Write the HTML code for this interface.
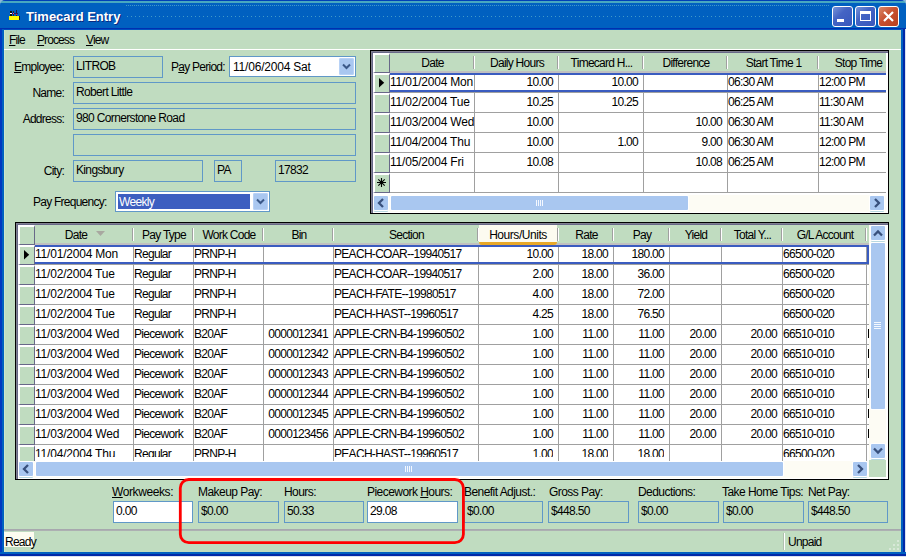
<!DOCTYPE html><html><head><meta charset="utf-8"><title>Timecard Entry</title><style>
*{box-sizing:border-box;margin:0;padding:0}
html,body{width:906px;height:557px;overflow:hidden;background:#c0dcc0}
body{position:relative;font-family:"Liberation Sans",sans-serif;font-size:12px;letter-spacing:-0.75px;color:#000;line-height:13px}
.a{position:absolute;white-space:nowrap}
.t{position:absolute;white-space:nowrap;height:13px;line-height:13px}
.f{position:absolute;border:1px solid #6098c8;background:#c0dcc0;padding:3px 0 0 2px;letter-spacing:-0.65px;white-space:nowrap;overflow:hidden}
.w{background:#fff}
.c{position:absolute;background:#fff;border-right:1px solid #a0a0a0;border-bottom:1px solid #a0a0a0;height:20px;line-height:13px;padding:3px 1px 0 0;letter-spacing:-0.7px;white-space:nowrap;overflow:hidden}
.r{text-align:right;padding-right:5px}
.h{position:absolute;background:#c0dcc0;height:18px;text-align:center;padding-top:4px;white-space:nowrap;overflow:hidden}
.hs{position:absolute;width:2px;height:13px;border-left:1px solid #a0a0a0;border-right:1px solid #fff}
.rh{position:absolute;background:#c0dcc0;border-top:2px solid #fff;border-left:2px solid #fff;border-right:1px solid #686888;border-bottom:1px solid #686888}
u{text-decoration:underline;text-decoration-thickness:1px;text-underline-offset:0.75px}
.d{letter-spacing:-0.2px}
</style></head><body>
<div class="a" style="left:0;top:0;width:906px;height:10px;background:#8cb8d8"></div>
<div class="a" style="left:0;top:0;width:906px;height:30px;background:linear-gradient(#0040b8 0,#0040b8 1px,#48a8c0 1px,#48a8c0 3px,#0060c0 3px,#0060c0 28px,#0030b0 28px,#0030b0 29px,#0050c0 29px);border-radius:5px 5px 0 0"></div>
<div class="a" style="left:126px;top:5px;width:704px;height:1px;background:repeating-linear-gradient(90deg,#4098c8 0,#4098c8 1px,transparent 1px,transparent 2px)"></div>
<div class="a" style="left:127px;top:16px;width:702px;height:1px;background:repeating-linear-gradient(90deg,#4098c8 0,#4098c8 1px,transparent 1px,transparent 4px)"></div>
<div class="a" style="left:0;top:29px;width:4px;height:528px;background:linear-gradient(90deg,#0038c0,#0038c0 2px,#0060c0 2px,#0060c0)"></div>
<div class="a" style="left:4px;top:30px;width:1px;height:522px;background:#cce6cc"></div>
<div class="a" style="left:901px;top:29px;width:5px;height:528px;background:linear-gradient(90deg,#0060c0,#0060c0 2px,#0028a8 2px,#0028a8 4px,#d8e0f0 4px)"></div>
<div class="a" style="left:0;top:552px;width:906px;height:5px;background:linear-gradient(#0060c0,#0060c0 2px,#0028a8 2px,#0028a8 4px,#d8e0f0 4px)"></div>
<div class="a" style="left:9px;top:16px;width:10px;height:4px;background:#ffff00;box-shadow:1px 0 0 #202020"></div>
<div class="a" style="left:10px;top:11px;width:2px;height:5px;background:#101010"></div>
<div class="a" style="left:13px;top:11px;width:1px;height:5px;background:#403010"></div>
<div class="a" style="left:16px;top:10px;width:1px;height:6px;background:#202040"></div>
<div class="a" style="left:12px;top:13px;width:6px;height:1px;background:#202060"></div>
<div class="a" style="left:10px;top:13px;width:2px;height:1px;background:#fff"></div>
<div class="a" style="left:13px;top:13px;width:1px;height:1px;background:#f030d0"></div>
<div class="a" style="left:16px;top:14px;width:1px;height:1px;background:#f02020"></div>
<div class="a" style="left:26px;top:9px;font-weight:bold;font-size:13px;letter-spacing:0;line-height:16px;color:#fff;text-shadow:1px 1px 0 #0a2a80">Timecard Entry</div>
<div class="a" style="left:832px;top:6px;width:21px;height:21px;border:1px solid #fff;border-radius:3px;background:linear-gradient(135deg,#7894d8,#4464c4 40%,#3858bc)"></div>
<div class="a" style="left:855px;top:6px;width:21px;height:21px;border:1px solid #fff;border-radius:3px;background:linear-gradient(135deg,#7894d8,#4464c4 40%,#3858bc)"></div>
<div class="a" style="left:878px;top:6px;width:21px;height:21px;border:1px solid #fff;border-radius:3px;background:linear-gradient(135deg,#d88868,#c85030 45%,#b84020)"></div>
<div class="a" style="left:837px;top:19px;width:7px;height:3px;background:#fff"></div>
<div class="a" style="left:860px;top:11px;width:11px;height:10px;border:1px solid #fff;border-top:3px solid #fff"></div>
<svg class="a" style="left:878px;top:6px" width="21" height="21"><path d="M6 6L15 15M15 6L6 15" stroke="#fff" stroke-width="2.2" fill="none"/></svg>
<div class="t" style="left:9px;top:34px;letter-spacing:-0.9px"><u>F</u>ile</div>
<div class="t" style="left:37px;top:34px;letter-spacing:-0.9px"><u>P</u>rocess</div>
<div class="t" style="left:86px;top:34px;letter-spacing:-0.9px"><u>V</u>iew</div>
<div class="a" style="left:4px;top:49px;width:897px;height:1px;background:#fff"></div>
<div class="t" style="right:842px;top:61px"><u>E</u>mployee:</div>
<div class="f" style="left:73px;top:56px;width:90px;height:22px">LITROB</div>
<div class="t" style="left:171px;top:61px">P<u>a</u>y Period:</div>
<div class="t" style="right:842px;top:87px">Name:</div>
<div class="f" style="left:73px;top:82px;width:283px;height:22px">Robert Little</div>
<div class="t" style="right:842px;top:113px">Address:</div>
<div class="f" style="left:73px;top:108px;width:283px;height:22px">980 Cornerstone Road</div>
<div class="f" style="left:73px;top:134px;width:283px;height:22px"></div>
<div class="t" style="right:842px;top:165px">City:</div>
<div class="f" style="left:73px;top:160px;width:130px;height:22px">Kingsbury</div>
<div class="f" style="left:214px;top:160px;width:28px;height:22px">PA</div>
<div class="f" style="left:275px;top:160px;width:81px;height:22px">17832</div>
<div class="t" style="left:33px;top:196px">Pay Frequency:</div>
<div class="a" style="left:229px;top:56px;width:127px;height:21px;border:1px solid #6098c8;background:#fff"></div>
<div class="t d" style="left:233px;top:61px">11/06/2004 Sat</div>
<div class="a" style="left:339px;top:58px;width:15px;height:17px;border-radius:2px;background:#a9c7f0;box-shadow:inset 0 0 0 1px #b8d2f6"></div>
<svg class="a" style="left:339px;top:58px" width="15" height="17"><path d="M4 6.5L7.5 10L11 6.5" stroke="#3a5888" stroke-width="2" fill="none"/></svg>
<div class="a" style="left:115px;top:191px;width:155px;height:21px;border:1px solid #6098c8;background:#fff"></div>
<div class="a" style="left:118px;top:194px;width:132px;height:15px;background:#3d5ec0;color:#fff;line-height:13px;padding:2px 0 0 1px;letter-spacing:-0.65px">Weekly</div>
<div class="a" style="left:253px;top:193px;width:15px;height:17px;border-radius:2px;background:#a9c7f0;box-shadow:inset 0 0 0 1px #b8d2f6"></div>
<svg class="a" style="left:253px;top:193px" width="15" height="17"><path d="M4 6.5L7.5 10L11 6.5" stroke="#3a5888" stroke-width="2" fill="none"/></svg>
<div class="a" style="left:370px;top:50px;width:519px;height:164px;border:1px solid #000;background:#fff"></div>
<div class="a" style="left:371px;top:51px;width:517px;height:1px;background:#808090"></div>
<div class="a" style="left:371px;top:51px;width:1px;height:162px;background:#808090"></div>
<div class="a" style="left:372px;top:52px;width:516px;height:1px;background:#686888"></div>
<div class="a" style="left:372px;top:52px;width:1px;height:161px;background:#686888"></div>
<div class="a" style="left:372px;top:52px;width:514px;height:21px;background:#c0dcc0;border-top:1px solid #686888;border-bottom:2px solid #c0c0c0"></div>
<div class="a" style="left:372px;top:52px;width:1px;height:141px;background:#686888"></div>
<div class="rh" style="left:373px;top:53px;width:17px;height:20px"></div>
<div class="h" style="left:390px;top:53px;width:85px">Date</div>
<div class="hs" style="left:473px;top:56px"></div>
<div class="h" style="left:475px;top:53px;width:84px">Daily Hours</div>
<div class="hs" style="left:557px;top:56px"></div>
<div class="h" style="left:559px;top:53px;width:85px">Timecard H...</div>
<div class="hs" style="left:642px;top:56px"></div>
<div class="h" style="left:644px;top:53px;width:84px">Difference</div>
<div class="hs" style="left:726px;top:56px"></div>
<div class="h" style="left:728px;top:53px;width:91px">Start Time 1</div>
<div class="hs" style="left:817px;top:56px"></div>
<div class="h" style="left:819px;top:53px;width:79px;clip-path:inset(0 12px 0 0)">Stop Time</div>
<div class="rh" style="left:373px;top:73px;width:17px;height:20px"></div>
<svg class="a" style="left:379px;top:78px" width="6" height="11"><path d="M0 0L5.2 4.75L0 9.5Z" fill="#000"/></svg>
<div class="c d" style="left:390px;top:73px;width:85px;height:20px">11/01/2004 Mon</div>
<div class="c r" style="left:475px;top:73px;width:84px;height:20px">10.00</div>
<div class="c r" style="left:559px;top:73px;width:85px;height:20px">10.00</div>
<div class="c r" style="left:644px;top:73px;width:84px;height:20px"></div>
<div class="c" style="left:728px;top:73px;width:91px;height:20px">06:30 AM</div>
<div class="c" style="left:819px;top:73px;width:67px;height:20px;border-right:0">12:00 PM</div>
<div class="a" style="left:390px;top:73px;width:496px;height:19px;border:2px solid #3a5cc0;border-left:0;border-right:0"></div>
<div class="rh" style="left:373px;top:93px;width:17px;height:20px"></div>
<div class="c d" style="left:390px;top:93px;width:85px;height:20px">11/02/2004 Tue</div>
<div class="c r" style="left:475px;top:93px;width:84px;height:20px">10.25</div>
<div class="c r" style="left:559px;top:93px;width:85px;height:20px">10.25</div>
<div class="c r" style="left:644px;top:93px;width:84px;height:20px"></div>
<div class="c" style="left:728px;top:93px;width:91px;height:20px">06:25 AM</div>
<div class="c" style="left:819px;top:93px;width:67px;height:20px;border-right:0">11:30 AM</div>
<div class="rh" style="left:373px;top:113px;width:17px;height:20px"></div>
<div class="c d" style="left:390px;top:113px;width:85px;height:20px">11/03/2004 Wed</div>
<div class="c r" style="left:475px;top:113px;width:84px;height:20px">10.00</div>
<div class="c r" style="left:559px;top:113px;width:85px;height:20px"></div>
<div class="c r" style="left:644px;top:113px;width:84px;height:20px">10.00</div>
<div class="c" style="left:728px;top:113px;width:91px;height:20px">06:30 AM</div>
<div class="c" style="left:819px;top:113px;width:67px;height:20px;border-right:0">11:30 AM</div>
<div class="rh" style="left:373px;top:133px;width:17px;height:20px"></div>
<div class="c d" style="left:390px;top:133px;width:85px;height:20px">11/04/2004 Thu</div>
<div class="c r" style="left:475px;top:133px;width:84px;height:20px">10.00</div>
<div class="c r" style="left:559px;top:133px;width:85px;height:20px">1.00</div>
<div class="c r" style="left:644px;top:133px;width:84px;height:20px">9.00</div>
<div class="c" style="left:728px;top:133px;width:91px;height:20px">06:30 AM</div>
<div class="c" style="left:819px;top:133px;width:67px;height:20px;border-right:0">12:00 PM</div>
<div class="rh" style="left:373px;top:153px;width:17px;height:20px"></div>
<div class="c d" style="left:390px;top:153px;width:85px;height:20px">11/05/2004 Fri</div>
<div class="c r" style="left:475px;top:153px;width:84px;height:20px">10.08</div>
<div class="c r" style="left:559px;top:153px;width:85px;height:20px"></div>
<div class="c r" style="left:644px;top:153px;width:84px;height:20px">10.08</div>
<div class="c" style="left:728px;top:153px;width:91px;height:20px">06:25 AM</div>
<div class="c" style="left:819px;top:153px;width:67px;height:20px;border-right:0">12:00 PM</div>
<div class="rh" style="left:373px;top:173px;width:17px;height:20px"></div>
<svg class="a" style="left:377px;top:178px" width="9" height="9"><path d="M4.5 0V9M0 4.5H9M1.3 1.3L7.7 7.7M7.7 1.3L1.3 7.7" stroke="#000" stroke-width="1.1" fill="none"/></svg>
<div class="c d" style="left:390px;top:173px;width:85px;height:20px"></div>
<div class="c r" style="left:475px;top:173px;width:84px;height:20px"></div>
<div class="c r" style="left:559px;top:173px;width:85px;height:20px"></div>
<div class="c r" style="left:644px;top:173px;width:84px;height:20px"></div>
<div class="c" style="left:728px;top:173px;width:91px;height:20px"></div>
<div class="c" style="left:819px;top:173px;width:67px;height:20px;border-right:0"></div>
<div class="a" style="left:373px;top:195px;width:513px;height:17px;background:#fdfcf4"></div>
<div class="a" style="left:374px;top:196px;width:14px;height:14px;border-radius:1px;background:#a9c7f0;box-shadow:0 0 0 1px #fff,0 2px 0 0 #b8d8e0"></div>
<svg class="a" style="left:374px;top:196px" width="14" height="14"><path d="M9 3L5 7L9 11" stroke="#38507c" stroke-width="2.3" fill="none"/></svg>
<div class="a" style="left:870px;top:196px;width:14px;height:14px;border-radius:1px;background:#a9c7f0;box-shadow:0 0 0 1px #fff,0 2px 0 0 #b8d8e0"></div>
<svg class="a" style="left:870px;top:196px" width="14" height="14"><path d="M5 3L9 7L5 11" stroke="#38507c" stroke-width="2.3" fill="none"/></svg>
<div class="a" style="left:391px;top:196px;width:297px;height:14px;border-radius:1px;background:#a9c7f0;box-shadow:0 0 0 1px #fff"></div>
<div class="a" style="left:536px;top:200px;width:1px;height:6px;background:#f4f8ff"></div>
<div class="a" style="left:538px;top:200px;width:1px;height:6px;background:#f4f8ff"></div>
<div class="a" style="left:540px;top:200px;width:1px;height:6px;background:#f4f8ff"></div>
<div class="a" style="left:542px;top:200px;width:1px;height:6px;background:#f4f8ff"></div>
<div class="a" style="left:15px;top:222px;width:874px;height:258px;border:1px solid #000;background:#fff"></div>
<div class="a" style="left:16px;top:223px;width:872px;height:1px;background:#808090"></div>
<div class="a" style="left:16px;top:223px;width:1px;height:256px;background:#808090"></div>
<div class="a" style="left:17px;top:224px;width:871px;height:1px;background:#686888"></div>
<div class="a" style="left:17px;top:224px;width:1px;height:255px;background:#686888"></div>
<div class="a" style="left:17px;top:224px;width:852px;height:21px;background:#c0dcc0;border-top:1px solid #686888;border-bottom:2px solid #c0c0c0"></div>
<div class="a" style="left:17px;top:224px;width:1px;height:237px;background:#686888"></div>
<div class="rh" style="left:18px;top:225px;width:17px;height:20px"></div>
<div class="h" style="left:35px;top:225px;width:99px;padding-right:17px">Date</div>
<div class="hs" style="left:132px;top:228px"></div>
<div class="h" style="left:134px;top:225px;width:60px">Pay Type</div>
<div class="hs" style="left:192px;top:228px"></div>
<div class="h" style="left:194px;top:225px;width:70px">Work Code</div>
<div class="hs" style="left:262px;top:228px"></div>
<div class="h" style="left:264px;top:225px;width:70px">Bin</div>
<div class="hs" style="left:332px;top:228px"></div>
<div class="h" style="left:334px;top:225px;width:145px">Section</div>
<div class="hs" style="left:477px;top:228px"></div>
<div class="h" style="left:479px;top:225px;width:78px;height:20px;padding-top:4px;letter-spacing:-0.45px;background:#fcfbf0;border-bottom:3px solid #e8a828;border-radius:0 0 3px 3px">Hours/Units</div>
<div class="hs" style="left:557px;top:228px"></div>
<div class="h" style="left:559px;top:225px;width:55px">Rate</div>
<div class="hs" style="left:612px;top:228px"></div>
<div class="h" style="left:614px;top:225px;width:56px">Pay</div>
<div class="hs" style="left:668px;top:228px"></div>
<div class="h" style="left:670px;top:225px;width:52px">Yield</div>
<div class="hs" style="left:720px;top:228px"></div>
<div class="h" style="left:722px;top:225px;width:61px">Total Y...</div>
<div class="hs" style="left:781px;top:228px"></div>
<div class="h" style="left:783px;top:225px;width:84px">G/L Account</div>
<div class="hs" style="left:865px;top:228px"></div>
<div class="h" style="left:867px;top:225px;width:34px;clip-path:inset(0 32px 0 0)"></div>
<svg class="a" style="left:96px;top:231px" width="9" height="5"><path d="M0 0H9L4.5 5Z" fill="#a8a8a0"/></svg>
<div class="rh" style="left:18px;top:245px;width:17px;height:20px"></div>
<svg class="a" style="left:24px;top:250px" width="6" height="11"><path d="M0 0L5.2 4.75L0 9.5Z" fill="#000"/></svg>
<div class="c d" style="left:35px;top:245px;width:99px;height:20px">11/01/2004 Mon</div>
<div class="c" style="left:134px;top:245px;width:60px;height:20px">Regular</div>
<div class="c" style="left:194px;top:245px;width:70px;height:20px">PRNP-H</div>
<div class="c r" style="left:264px;top:245px;width:70px;height:20px"></div>
<div class="c" style="left:334px;top:245px;width:145px;height:20px">PEACH-COAR--19940517</div>
<div class="c r" style="left:479px;top:245px;width:80px;height:20px">10.00</div>
<div class="c r" style="left:559px;top:245px;width:55px;height:20px">18.00</div>
<div class="c r" style="left:614px;top:245px;width:56px;height:20px">180.00</div>
<div class="c r" style="left:670px;top:245px;width:52px;height:20px"></div>
<div class="c r" style="left:722px;top:245px;width:61px;height:20px"></div>
<div class="c" style="left:783px;top:245px;width:84px;height:20px">66500-020</div>
<div class="c" style="left:867px;top:245px;width:2px;height:20px;border-right:0"></div>
<div class="a" style="left:35px;top:245px;width:834px;height:19px;border:2px solid #3a5cc0;border-left:0"></div>
<div class="rh" style="left:18px;top:265px;width:17px;height:20px"></div>
<div class="c d" style="left:35px;top:265px;width:99px;height:20px">11/02/2004 Tue</div>
<div class="c" style="left:134px;top:265px;width:60px;height:20px">Regular</div>
<div class="c" style="left:194px;top:265px;width:70px;height:20px">PRNP-H</div>
<div class="c r" style="left:264px;top:265px;width:70px;height:20px"></div>
<div class="c" style="left:334px;top:265px;width:145px;height:20px">PEACH-COAR--19940517</div>
<div class="c r" style="left:479px;top:265px;width:80px;height:20px">2.00</div>
<div class="c r" style="left:559px;top:265px;width:55px;height:20px">18.00</div>
<div class="c r" style="left:614px;top:265px;width:56px;height:20px">36.00</div>
<div class="c r" style="left:670px;top:265px;width:52px;height:20px"></div>
<div class="c r" style="left:722px;top:265px;width:61px;height:20px"></div>
<div class="c" style="left:783px;top:265px;width:84px;height:20px">66500-020</div>
<div class="c" style="left:867px;top:265px;width:2px;height:20px;border-right:0"></div>
<div class="rh" style="left:18px;top:285px;width:17px;height:20px"></div>
<div class="c d" style="left:35px;top:285px;width:99px;height:20px">11/02/2004 Tue</div>
<div class="c" style="left:134px;top:285px;width:60px;height:20px">Regular</div>
<div class="c" style="left:194px;top:285px;width:70px;height:20px">PRNP-H</div>
<div class="c r" style="left:264px;top:285px;width:70px;height:20px"></div>
<div class="c" style="left:334px;top:285px;width:145px;height:20px">PEACH-FATE--19980517</div>
<div class="c r" style="left:479px;top:285px;width:80px;height:20px">4.00</div>
<div class="c r" style="left:559px;top:285px;width:55px;height:20px">18.00</div>
<div class="c r" style="left:614px;top:285px;width:56px;height:20px">72.00</div>
<div class="c r" style="left:670px;top:285px;width:52px;height:20px"></div>
<div class="c r" style="left:722px;top:285px;width:61px;height:20px"></div>
<div class="c" style="left:783px;top:285px;width:84px;height:20px">66500-020</div>
<div class="c" style="left:867px;top:285px;width:2px;height:20px;border-right:0"></div>
<div class="rh" style="left:18px;top:305px;width:17px;height:20px"></div>
<div class="c d" style="left:35px;top:305px;width:99px;height:20px">11/02/2004 Tue</div>
<div class="c" style="left:134px;top:305px;width:60px;height:20px">Regular</div>
<div class="c" style="left:194px;top:305px;width:70px;height:20px">PRNP-H</div>
<div class="c r" style="left:264px;top:305px;width:70px;height:20px"></div>
<div class="c" style="left:334px;top:305px;width:145px;height:20px">PEACH-HAST--19960517</div>
<div class="c r" style="left:479px;top:305px;width:80px;height:20px">4.25</div>
<div class="c r" style="left:559px;top:305px;width:55px;height:20px">18.00</div>
<div class="c r" style="left:614px;top:305px;width:56px;height:20px">76.50</div>
<div class="c r" style="left:670px;top:305px;width:52px;height:20px"></div>
<div class="c r" style="left:722px;top:305px;width:61px;height:20px"></div>
<div class="c" style="left:783px;top:305px;width:84px;height:20px">66500-020</div>
<div class="c" style="left:867px;top:305px;width:2px;height:20px;border-right:0"></div>
<div class="rh" style="left:18px;top:325px;width:17px;height:20px"></div>
<div class="c d" style="left:35px;top:325px;width:99px;height:20px">11/03/2004 Wed</div>
<div class="c" style="left:134px;top:325px;width:60px;height:20px">Piecework</div>
<div class="c" style="left:194px;top:325px;width:70px;height:20px">B20AF</div>
<div class="c r" style="left:264px;top:325px;width:70px;height:20px">0000012341</div>
<div class="c" style="left:334px;top:325px;width:145px;height:20px">APPLE-CRN-B4-19960502</div>
<div class="c r" style="left:479px;top:325px;width:80px;height:20px">1.00</div>
<div class="c r" style="left:559px;top:325px;width:55px;height:20px">11.00</div>
<div class="c r" style="left:614px;top:325px;width:56px;height:20px">11.00</div>
<div class="c r" style="left:670px;top:325px;width:52px;height:20px">20.00</div>
<div class="c r" style="left:722px;top:325px;width:61px;height:20px">20.00</div>
<div class="c" style="left:783px;top:325px;width:84px;height:20px">66510-010</div>
<div class="c" style="left:867px;top:325px;width:2px;height:20px;border-right:0"></div>
<div class="rh" style="left:18px;top:345px;width:17px;height:20px"></div>
<div class="c d" style="left:35px;top:345px;width:99px;height:20px">11/03/2004 Wed</div>
<div class="c" style="left:134px;top:345px;width:60px;height:20px">Piecework</div>
<div class="c" style="left:194px;top:345px;width:70px;height:20px">B20AF</div>
<div class="c r" style="left:264px;top:345px;width:70px;height:20px">0000012342</div>
<div class="c" style="left:334px;top:345px;width:145px;height:20px">APPLE-CRN-B4-19960502</div>
<div class="c r" style="left:479px;top:345px;width:80px;height:20px">1.00</div>
<div class="c r" style="left:559px;top:345px;width:55px;height:20px">11.00</div>
<div class="c r" style="left:614px;top:345px;width:56px;height:20px">11.00</div>
<div class="c r" style="left:670px;top:345px;width:52px;height:20px">20.00</div>
<div class="c r" style="left:722px;top:345px;width:61px;height:20px">20.00</div>
<div class="c" style="left:783px;top:345px;width:84px;height:20px">66510-010</div>
<div class="c" style="left:867px;top:345px;width:2px;height:20px;border-right:0"></div>
<div class="rh" style="left:18px;top:365px;width:17px;height:20px"></div>
<div class="c d" style="left:35px;top:365px;width:99px;height:20px">11/03/2004 Wed</div>
<div class="c" style="left:134px;top:365px;width:60px;height:20px">Piecework</div>
<div class="c" style="left:194px;top:365px;width:70px;height:20px">B20AF</div>
<div class="c r" style="left:264px;top:365px;width:70px;height:20px">0000012343</div>
<div class="c" style="left:334px;top:365px;width:145px;height:20px">APPLE-CRN-B4-19960502</div>
<div class="c r" style="left:479px;top:365px;width:80px;height:20px">1.00</div>
<div class="c r" style="left:559px;top:365px;width:55px;height:20px">11.00</div>
<div class="c r" style="left:614px;top:365px;width:56px;height:20px">11.00</div>
<div class="c r" style="left:670px;top:365px;width:52px;height:20px">20.00</div>
<div class="c r" style="left:722px;top:365px;width:61px;height:20px">20.00</div>
<div class="c" style="left:783px;top:365px;width:84px;height:20px">66510-010</div>
<div class="c" style="left:867px;top:365px;width:2px;height:20px;border-right:0"></div>
<div class="rh" style="left:18px;top:385px;width:17px;height:20px"></div>
<div class="c d" style="left:35px;top:385px;width:99px;height:20px">11/03/2004 Wed</div>
<div class="c" style="left:134px;top:385px;width:60px;height:20px">Piecework</div>
<div class="c" style="left:194px;top:385px;width:70px;height:20px">B20AF</div>
<div class="c r" style="left:264px;top:385px;width:70px;height:20px">0000012344</div>
<div class="c" style="left:334px;top:385px;width:145px;height:20px">APPLE-CRN-B4-19960502</div>
<div class="c r" style="left:479px;top:385px;width:80px;height:20px">1.00</div>
<div class="c r" style="left:559px;top:385px;width:55px;height:20px">11.00</div>
<div class="c r" style="left:614px;top:385px;width:56px;height:20px">11.00</div>
<div class="c r" style="left:670px;top:385px;width:52px;height:20px">20.00</div>
<div class="c r" style="left:722px;top:385px;width:61px;height:20px">20.00</div>
<div class="c" style="left:783px;top:385px;width:84px;height:20px">66510-010</div>
<div class="c" style="left:867px;top:385px;width:2px;height:20px;border-right:0"></div>
<div class="rh" style="left:18px;top:405px;width:17px;height:20px"></div>
<div class="c d" style="left:35px;top:405px;width:99px;height:20px">11/03/2004 Wed</div>
<div class="c" style="left:134px;top:405px;width:60px;height:20px">Piecework</div>
<div class="c" style="left:194px;top:405px;width:70px;height:20px">B20AF</div>
<div class="c r" style="left:264px;top:405px;width:70px;height:20px">0000012345</div>
<div class="c" style="left:334px;top:405px;width:145px;height:20px">APPLE-CRN-B4-19960502</div>
<div class="c r" style="left:479px;top:405px;width:80px;height:20px">1.00</div>
<div class="c r" style="left:559px;top:405px;width:55px;height:20px">11.00</div>
<div class="c r" style="left:614px;top:405px;width:56px;height:20px">11.00</div>
<div class="c r" style="left:670px;top:405px;width:52px;height:20px">20.00</div>
<div class="c r" style="left:722px;top:405px;width:61px;height:20px">20.00</div>
<div class="c" style="left:783px;top:405px;width:84px;height:20px">66510-010</div>
<div class="c" style="left:867px;top:405px;width:2px;height:20px;border-right:0"></div>
<div class="rh" style="left:18px;top:425px;width:17px;height:20px"></div>
<div class="c d" style="left:35px;top:425px;width:99px;height:20px">11/03/2004 Wed</div>
<div class="c" style="left:134px;top:425px;width:60px;height:20px">Piecework</div>
<div class="c" style="left:194px;top:425px;width:70px;height:20px">B20AF</div>
<div class="c r" style="left:264px;top:425px;width:70px;height:20px">0000123456</div>
<div class="c" style="left:334px;top:425px;width:145px;height:20px">APPLE-CRN-B4-19960502</div>
<div class="c r" style="left:479px;top:425px;width:80px;height:20px">1.00</div>
<div class="c r" style="left:559px;top:425px;width:55px;height:20px">11.00</div>
<div class="c r" style="left:614px;top:425px;width:56px;height:20px">11.00</div>
<div class="c r" style="left:670px;top:425px;width:52px;height:20px">20.00</div>
<div class="c r" style="left:722px;top:425px;width:61px;height:20px">20.00</div>
<div class="c" style="left:783px;top:425px;width:84px;height:20px">66510-010</div>
<div class="c" style="left:867px;top:425px;width:2px;height:20px;border-right:0"></div>
<div class="rh" style="left:18px;top:445px;width:17px;height:16px;border-bottom:0"></div>
<div class="c d" style="left:35px;top:445px;width:99px;height:16px;border-bottom:0"><div style="height:9px;overflow:hidden">11/04/2004 Thu</div></div>
<div class="c" style="left:134px;top:445px;width:60px;height:16px;border-bottom:0"><div style="height:9px;overflow:hidden">Regular</div></div>
<div class="c" style="left:194px;top:445px;width:70px;height:16px;border-bottom:0"><div style="height:9px;overflow:hidden">PRNP-H</div></div>
<div class="c r" style="left:264px;top:445px;width:70px;height:16px;border-bottom:0"></div>
<div class="c" style="left:334px;top:445px;width:145px;height:16px;border-bottom:0"><div style="height:9px;overflow:hidden">PEACH-HAST--19960517</div></div>
<div class="c r" style="left:479px;top:445px;width:80px;height:16px;border-bottom:0"><div style="height:9px;overflow:hidden">1.00</div></div>
<div class="c r" style="left:559px;top:445px;width:55px;height:16px;border-bottom:0"><div style="height:9px;overflow:hidden">18.00</div></div>
<div class="c r" style="left:614px;top:445px;width:56px;height:16px;border-bottom:0"><div style="height:9px;overflow:hidden">18.00</div></div>
<div class="c r" style="left:670px;top:445px;width:52px;height:16px;border-bottom:0"></div>
<div class="c r" style="left:722px;top:445px;width:61px;height:16px;border-bottom:0"></div>
<div class="c" style="left:783px;top:445px;width:84px;height:16px;border-bottom:0"><div style="height:9px;overflow:hidden">66500-020</div></div>
<div class="c" style="left:867px;top:445px;width:2px;height:16px;border-right:0;border-bottom:0"></div>
<div class="a" style="left:869px;top:225px;width:17px;height:235px;background:#fdfcf4"></div>
<div class="a" style="left:871px;top:226px;width:14px;height:14px;border-radius:1px;background:#a9c7f0;box-shadow:0 0 0 1px #fff,0 2px 0 0 #b8d8e0"></div>
<svg class="a" style="left:871px;top:226px" width="14" height="14"><path d="M3 9.5L7 5.5L11 9.5" stroke="#38507c" stroke-width="2.3" fill="none"/></svg>
<div class="a" style="left:871px;top:444px;width:14px;height:14px;border-radius:1px;background:#a9c7f0;box-shadow:0 0 0 1px #fff,0 2px 0 0 #b8d8e0"></div>
<svg class="a" style="left:871px;top:444px" width="14" height="14"><path d="M3 4.5L7 8.5L11 4.5" stroke="#38507c" stroke-width="2.3" fill="none"/></svg>
<div class="a" style="left:871px;top:243px;width:14px;height:166px;border-radius:1px;background:#a9c7f0;box-shadow:0 0 0 1px #fff"></div>
<div class="a" style="left:874px;top:322px;width:7px;height:1px;background:#f4f8ff"></div>
<div class="a" style="left:874px;top:324px;width:7px;height:1px;background:#f4f8ff"></div>
<div class="a" style="left:874px;top:326px;width:7px;height:1px;background:#f4f8ff"></div>
<div class="a" style="left:874px;top:328px;width:7px;height:1px;background:#f4f8ff"></div>
<div class="a" style="left:18px;top:461px;width:851px;height:17px;background:#fdfcf4"></div>
<div class="a" style="left:19px;top:462px;width:14px;height:14px;border-radius:1px;background:#a9c7f0;box-shadow:0 0 0 1px #fff,0 2px 0 0 #b8d8e0"></div>
<svg class="a" style="left:19px;top:462px" width="14" height="14"><path d="M9 3L5 7L9 11" stroke="#38507c" stroke-width="2.3" fill="none"/></svg>
<div class="a" style="left:853px;top:462px;width:14px;height:14px;border-radius:1px;background:#a9c7f0;box-shadow:0 0 0 1px #fff,0 2px 0 0 #b8d8e0"></div>
<svg class="a" style="left:853px;top:462px" width="14" height="14"><path d="M5 3L9 7L5 11" stroke="#38507c" stroke-width="2.3" fill="none"/></svg>
<div class="a" style="left:36px;top:462px;width:747px;height:14px;border-radius:1px;background:#a9c7f0;box-shadow:0 0 0 1px #fff"></div>
<div class="a" style="left:405px;top:466px;width:1px;height:6px;background:#f4f8ff"></div>
<div class="a" style="left:407px;top:466px;width:1px;height:6px;background:#f4f8ff"></div>
<div class="a" style="left:409px;top:466px;width:1px;height:6px;background:#f4f8ff"></div>
<div class="a" style="left:411px;top:466px;width:1px;height:6px;background:#f4f8ff"></div>
<div class="a" style="left:869px;top:460px;width:17px;height:17px;background:#c0dcc0"></div>
<div class="a" style="left:868px;top:329px;width:1px;height:9px;background:#000"></div>
<div class="a" style="left:868px;top:349px;width:1px;height:9px;background:#000"></div>
<div class="a" style="left:868px;top:369px;width:1px;height:9px;background:#000"></div>
<div class="a" style="left:868px;top:389px;width:1px;height:9px;background:#000"></div>
<div class="a" style="left:868px;top:409px;width:1px;height:9px;background:#000"></div>
<div class="a" style="left:868px;top:429px;width:1px;height:9px;background:#000"></div>
<div class="t" style="left:112px;top:486px;letter-spacing:-0.4px"><u>W</u>orkweeks:</div>
<div class="t" style="left:198px;top:486px;letter-spacing:-0.55px">Makeup Pay:</div>
<div class="t" style="left:284px;top:486px;letter-spacing:-0.55px">Hours:</div>
<div class="t" style="left:367px;top:486px;letter-spacing:-0.55px">Piecework <u>H</u>ours:</div>
<div class="t" style="left:464px;top:486px;letter-spacing:-0.55px">Benefit Adjust.:</div>
<div class="t" style="left:549px;top:486px;letter-spacing:-0.55px">Gross Pay:</div>
<div class="t" style="left:638px;top:486px;letter-spacing:-0.55px">Deductions:</div>
<div class="t" style="left:722px;top:486px;letter-spacing:-0.55px">Take Home Tips:</div>
<div class="t" style="left:808px;top:486px;letter-spacing:-0.55px">Net Pay:</div>
<div class="f w" style="left:113px;top:501px;width:80px;height:22px">0.00</div>
<div class="f" style="left:198px;top:501px;width:81px;height:22px">$0.00</div>
<div class="f" style="left:284px;top:501px;width:80px;height:22px">50.33</div>
<div class="f w" style="left:367px;top:501px;width:91px;height:22px">29.08</div>
<div class="f" style="left:464px;top:501px;width:79px;height:22px">$0.00</div>
<div class="f" style="left:548px;top:501px;width:81px;height:22px">$448.50</div>
<div class="f" style="left:638px;top:501px;width:81px;height:22px">$0.00</div>
<div class="f" style="left:723px;top:501px;width:81px;height:22px">$0.00</div>
<div class="f" style="left:808px;top:501px;width:80px;height:22px">$448.50</div>
<div class="a" style="left:4px;top:529px;width:897px;height:2px;background:linear-gradient(#a4a4ac,#b0b4b4)"></div>
<div class="a" style="left:4px;top:532px;width:30px;height:15px;background:#fdfcf0"></div>
<div class="t" style="left:5px;top:536px">Ready</div>
<div class="a" style="left:783px;top:533px;width:2px;height:17px;border-left:1px solid #b0c0b0;border-right:1px solid #fff"></div>
<div class="t" style="left:788px;top:536px">Unpaid</div>
<div class="a" style="left:897px;top:540px;width:2px;height:2px;background:#d8e8d8"></div>
<div class="a" style="left:893px;top:544px;width:2px;height:2px;background:#d8e8d8"></div>
<div class="a" style="left:897px;top:544px;width:2px;height:2px;background:#d8e8d8"></div>
<div class="a" style="left:889px;top:548px;width:2px;height:2px;background:#d8e8d8"></div>
<div class="a" style="left:893px;top:548px;width:2px;height:2px;background:#d8e8d8"></div>
<div class="a" style="left:897px;top:548px;width:2px;height:2px;background:#d8e8d8"></div>
<svg class="a" style="left:170px;top:470px" width="310" height="87"><rect x="10.3" y="9.5" width="283.1" height="63.2" rx="8.5" ry="8.5" fill="none" stroke="#ff0000" stroke-width="2.8"/></svg>
</body></html>
